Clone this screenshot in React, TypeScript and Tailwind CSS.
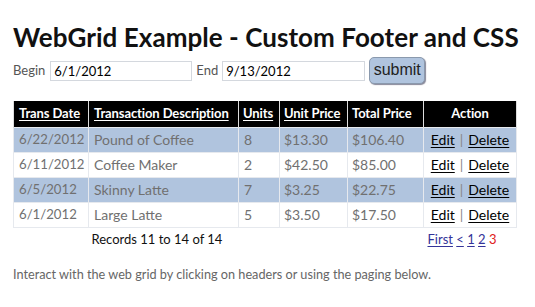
const rows = [
  { date: "6/22/2012", desc: "Pound of Coffee", units: "8", unit: "$13.30", total: "$106.40" },
  { date: "6/11/2012", desc: "Coffee Maker", units: "2", unit: "$42.50", total: "$85.00" },
  { date: "6/5/2012", desc: "Skinny Latte", units: "7", unit: "$3.25", total: "$22.75" },
  { date: "6/1/2012", desc: "Large Latte", units: "5", unit: "$3.50", total: "$17.50" },
];

const font = "font-['Lato','Open_Sans',sans-serif]";
const th = "border-x border-[#ddd] whitespace-nowrap";
const td = "border border-[#e6e9ee] whitespace-nowrap";

export default function App() {
  return (
    <div className={`${font} bg-white w-[535px] h-[307px] overflow-hidden px-[13px] pt-[22px]`}>
      <h1 className="text-[26px] leading-[30px] font-bold text-[#111] whitespace-nowrap tracking-[0.05px]">
        WebGrid Example - Custom Footer and CSS
      </h1>
      <div className="flex items-center mt-[5px] h-[28px] text-[13px] text-[#555]">
        <span>Begin</span>
        <input
          defaultValue="6/1/2012"
          className="ml-[5px] w-[142px] h-[20px] border border-[#d4d8de] px-[3px] text-[13px] text-black outline-none"
        />
        <span className="ml-[4px]">End</span>
        <input
          defaultValue="9/13/2012"
          className="ml-[4px] w-[143px] h-[20px] border border-[#d4d8de] px-[3px] text-[13px] text-black outline-none"
        />
        <button className="ml-[4px] -mt-[2px] w-[56px] h-[27px] rounded-[5px] bg-[#b0c4de] border border-[#8a99ad] shadow-[1px_1px_1px_#889] font-['Liberation_Sans',sans-serif] text-[16px] text-[#222]">
          submit
        </button>
      </div>
      <table className="mt-[16px] w-[503px] table-fixed border-collapse text-[14px]">
        <colgroup>
          <col className="w-[75px]" />
          <col className="w-[150px]" />
          <col className="w-[41px]" />
          <col className="w-[68px]" />
          <col className="w-[76px]" />
          <col className="w-[93px]" />
        </colgroup>
        <thead>
          <tr className="h-[26px] bg-black text-white font-bold text-left text-[13px] tracking-[-0.1px]">
            <th className={`${th} px-[5px]`}><a href="#" className="underline underline-offset-2">Trans Date</a></th>
            <th className={`${th} px-[5px]`}><a href="#" className="underline underline-offset-2">Transaction Description</a></th>
            <th className={`${th} px-[4px]`}><a href="#" className="underline underline-offset-2">Units</a></th>
            <th className={`${th} px-[4px]`}><a href="#" className="underline underline-offset-2">Unit Price</a></th>
            <th className={`${th} px-[4px]`}>Total Price</th>
            <th className={`${th} px-[4px] text-center`}>Action</th>
          </tr>
        </thead>
        <tbody className="text-[#707070]">
          {rows.map((r, i) => (
            <tr key={r.date} className={`h-[25px] ${i % 2 === 0 ? "bg-[#b0c4de]" : "bg-white"}`}>
              <td className={`${td} px-[5px] text-[13.2px]`}>{r.date}</td>
              <td className={`${td} px-[5px]`}>{r.desc}</td>
              <td className={`${td} px-[5px]`}>{r.units}</td>
              <td className={`${td} px-[4px]`}>{r.unit}</td>
              <td className={`${td} px-[4px]`}>{r.total}</td>
              <td className={`${td} px-[4px] text-center text-black`}>
                <a href="#" className="underline underline-offset-2">Edit</a>
                <span className="text-[#888] mx-[5px]">|</span>
                <a href="#" className="underline underline-offset-2">Delete</a>
              </td>
            </tr>
          ))}
          <tr className="h-[25px] text-[13px]">
            <td colSpan={3} className="pl-[78px] text-left text-[#111] whitespace-nowrap">Records 11 to 14 of 14</td>
            <td colSpan={2} />
            <td className="px-[4px] text-[#333399] whitespace-nowrap">
              <a href="#" className="underline underline-offset-2">First</a>{" "}
              <a href="#" className="underline underline-offset-2">&lt;</a>{" "}
              <a href="#" className="underline underline-offset-2">1</a>{" "}
              <a href="#" className="underline underline-offset-2">2</a>{" "}
              <span className="text-[#e02020]">3</span>
            </td>
          </tr>
        </tbody>
      </table>
      <p className="mt-[13px] text-[12.7px] text-[#666]">
        Interact with the web grid by clicking on headers or using the paging below.
      </p>
    </div>
  );
}
